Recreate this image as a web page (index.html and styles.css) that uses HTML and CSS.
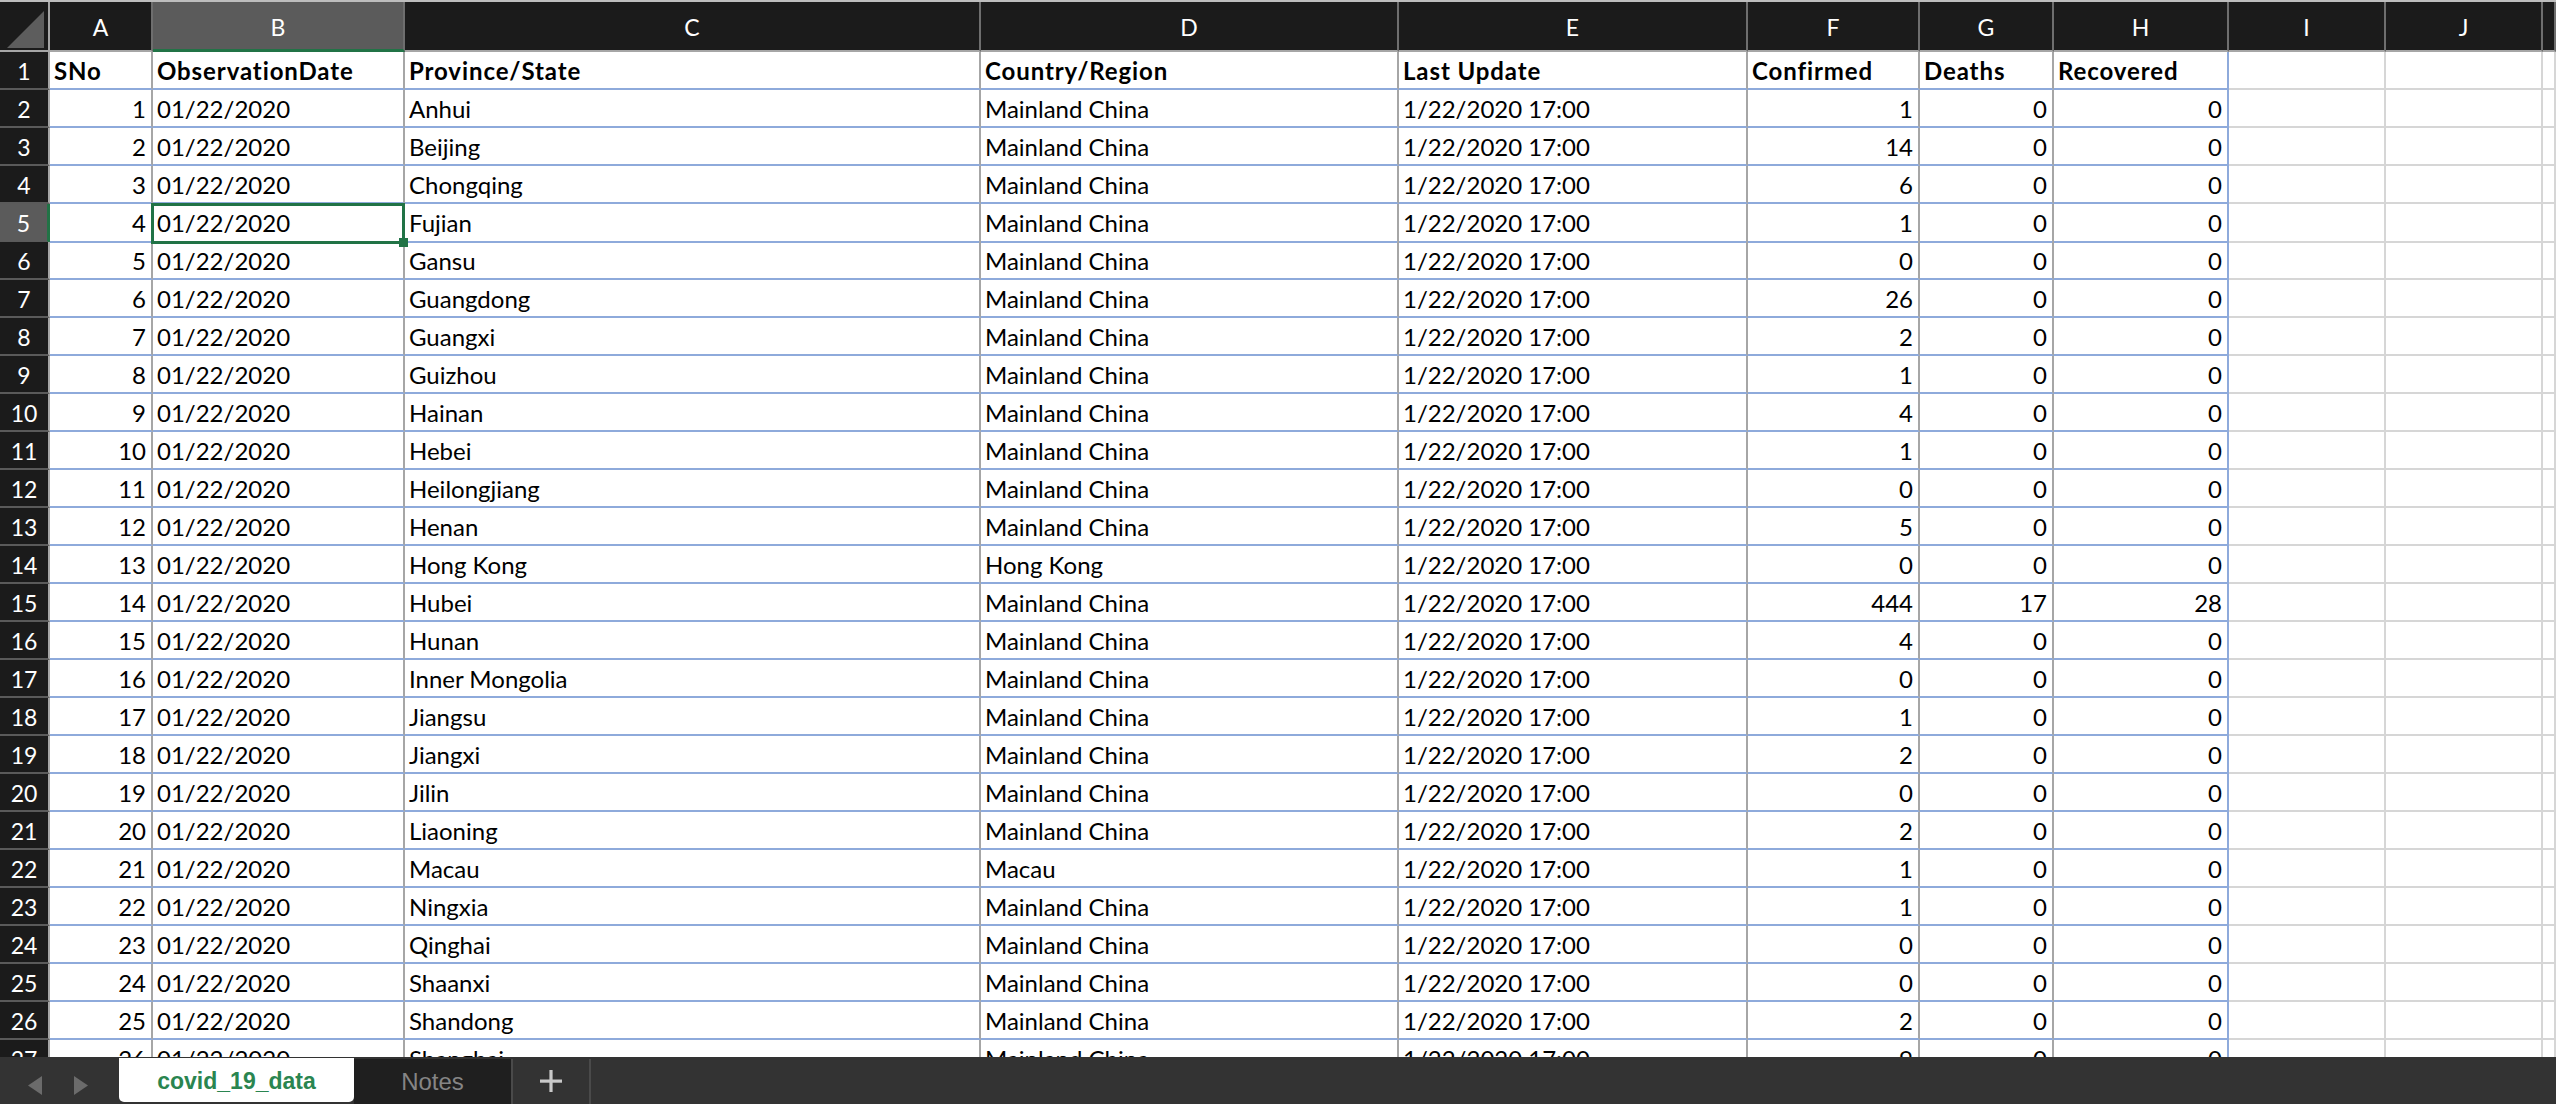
FILE: index.html
```html
<!DOCTYPE html>
<html>
<head>
<meta charset="utf-8">
<link rel="stylesheet" href="styles.css">
</head>
<body>
<div class="app">
  <div class="sheet">
    <div class="row head">
      <div class="corner"><svg width="50" height="50" viewBox="0 0 50 50"><polygon points="7,46 44,46 44,9" fill="#5d5d5d"/></svg></div>
      <div class="ch">A</div><div class="ch sel">B</div><div class="ch">C</div><div class="ch">D</div><div class="ch">E</div><div class="ch">F</div><div class="ch">G</div><div class="ch">H</div><div class="ch">I</div><div class="ch">J</div><div class="ch"></div>
    </div>
    <div class="row"><div class="rh">1</div><div class="c b">SNo</div><div class="c b">ObservationDate</div><div class="c b">Province/State</div><div class="c b">Country/Region</div><div class="c b">Last Update</div><div class="c b">Confirmed</div><div class="c b">Deaths</div><div class="c b hl">Recovered</div><div class="e"></div><div class="e"></div><div class="e"></div></div>
    <div class="row"><div class="rh">2</div><div class="c n">1</div><div class="c">01/22/2020</div><div class="c">Anhui</div><div class="c">Mainland China</div><div class="c">1/22/2020 17:00</div><div class="c n">1</div><div class="c n">0</div><div class="c n hl">0</div><div class="e"></div><div class="e"></div><div class="e"></div></div>
    <div class="row"><div class="rh">3</div><div class="c n">2</div><div class="c">01/22/2020</div><div class="c">Beijing</div><div class="c">Mainland China</div><div class="c">1/22/2020 17:00</div><div class="c n">14</div><div class="c n">0</div><div class="c n hl">0</div><div class="e"></div><div class="e"></div><div class="e"></div></div>
    <div class="row"><div class="rh">4</div><div class="c n">3</div><div class="c">01/22/2020</div><div class="c">Chongqing</div><div class="c">Mainland China</div><div class="c">1/22/2020 17:00</div><div class="c n">6</div><div class="c n">0</div><div class="c n hl">0</div><div class="e"></div><div class="e"></div><div class="e"></div></div>
    <div class="row"><div class="rh selrow">5</div><div class="c n">4</div><div class="c active">01/22/2020<span class="handle"></span></div><div class="c">Fujian</div><div class="c">Mainland China</div><div class="c">1/22/2020 17:00</div><div class="c n">1</div><div class="c n">0</div><div class="c n hl">0</div><div class="e"></div><div class="e"></div><div class="e"></div></div>
    <div class="row"><div class="rh">6</div><div class="c n">5</div><div class="c">01/22/2020</div><div class="c">Gansu</div><div class="c">Mainland China</div><div class="c">1/22/2020 17:00</div><div class="c n">0</div><div class="c n">0</div><div class="c n hl">0</div><div class="e"></div><div class="e"></div><div class="e"></div></div>
    <div class="row"><div class="rh">7</div><div class="c n">6</div><div class="c">01/22/2020</div><div class="c">Guangdong</div><div class="c">Mainland China</div><div class="c">1/22/2020 17:00</div><div class="c n">26</div><div class="c n">0</div><div class="c n hl">0</div><div class="e"></div><div class="e"></div><div class="e"></div></div>
    <div class="row"><div class="rh">8</div><div class="c n">7</div><div class="c">01/22/2020</div><div class="c">Guangxi</div><div class="c">Mainland China</div><div class="c">1/22/2020 17:00</div><div class="c n">2</div><div class="c n">0</div><div class="c n hl">0</div><div class="e"></div><div class="e"></div><div class="e"></div></div>
    <div class="row"><div class="rh">9</div><div class="c n">8</div><div class="c">01/22/2020</div><div class="c">Guizhou</div><div class="c">Mainland China</div><div class="c">1/22/2020 17:00</div><div class="c n">1</div><div class="c n">0</div><div class="c n hl">0</div><div class="e"></div><div class="e"></div><div class="e"></div></div>
    <div class="row"><div class="rh">10</div><div class="c n">9</div><div class="c">01/22/2020</div><div class="c">Hainan</div><div class="c">Mainland China</div><div class="c">1/22/2020 17:00</div><div class="c n">4</div><div class="c n">0</div><div class="c n hl">0</div><div class="e"></div><div class="e"></div><div class="e"></div></div>
    <div class="row"><div class="rh">11</div><div class="c n">10</div><div class="c">01/22/2020</div><div class="c">Hebei</div><div class="c">Mainland China</div><div class="c">1/22/2020 17:00</div><div class="c n">1</div><div class="c n">0</div><div class="c n hl">0</div><div class="e"></div><div class="e"></div><div class="e"></div></div>
    <div class="row"><div class="rh">12</div><div class="c n">11</div><div class="c">01/22/2020</div><div class="c">Heilongjiang</div><div class="c">Mainland China</div><div class="c">1/22/2020 17:00</div><div class="c n">0</div><div class="c n">0</div><div class="c n hl">0</div><div class="e"></div><div class="e"></div><div class="e"></div></div>
    <div class="row"><div class="rh">13</div><div class="c n">12</div><div class="c">01/22/2020</div><div class="c">Henan</div><div class="c">Mainland China</div><div class="c">1/22/2020 17:00</div><div class="c n">5</div><div class="c n">0</div><div class="c n hl">0</div><div class="e"></div><div class="e"></div><div class="e"></div></div>
    <div class="row"><div class="rh">14</div><div class="c n">13</div><div class="c">01/22/2020</div><div class="c">Hong Kong</div><div class="c">Hong Kong</div><div class="c">1/22/2020 17:00</div><div class="c n">0</div><div class="c n">0</div><div class="c n hl">0</div><div class="e"></div><div class="e"></div><div class="e"></div></div>
    <div class="row"><div class="rh">15</div><div class="c n">14</div><div class="c">01/22/2020</div><div class="c">Hubei</div><div class="c">Mainland China</div><div class="c">1/22/2020 17:00</div><div class="c n">444</div><div class="c n">17</div><div class="c n hl">28</div><div class="e"></div><div class="e"></div><div class="e"></div></div>
    <div class="row"><div class="rh">16</div><div class="c n">15</div><div class="c">01/22/2020</div><div class="c">Hunan</div><div class="c">Mainland China</div><div class="c">1/22/2020 17:00</div><div class="c n">4</div><div class="c n">0</div><div class="c n hl">0</div><div class="e"></div><div class="e"></div><div class="e"></div></div>
    <div class="row"><div class="rh">17</div><div class="c n">16</div><div class="c">01/22/2020</div><div class="c">Inner Mongolia</div><div class="c">Mainland China</div><div class="c">1/22/2020 17:00</div><div class="c n">0</div><div class="c n">0</div><div class="c n hl">0</div><div class="e"></div><div class="e"></div><div class="e"></div></div>
    <div class="row"><div class="rh">18</div><div class="c n">17</div><div class="c">01/22/2020</div><div class="c">Jiangsu</div><div class="c">Mainland China</div><div class="c">1/22/2020 17:00</div><div class="c n">1</div><div class="c n">0</div><div class="c n hl">0</div><div class="e"></div><div class="e"></div><div class="e"></div></div>
    <div class="row"><div class="rh">19</div><div class="c n">18</div><div class="c">01/22/2020</div><div class="c">Jiangxi</div><div class="c">Mainland China</div><div class="c">1/22/2020 17:00</div><div class="c n">2</div><div class="c n">0</div><div class="c n hl">0</div><div class="e"></div><div class="e"></div><div class="e"></div></div>
    <div class="row"><div class="rh">20</div><div class="c n">19</div><div class="c">01/22/2020</div><div class="c">Jilin</div><div class="c">Mainland China</div><div class="c">1/22/2020 17:00</div><div class="c n">0</div><div class="c n">0</div><div class="c n hl">0</div><div class="e"></div><div class="e"></div><div class="e"></div></div>
    <div class="row"><div class="rh">21</div><div class="c n">20</div><div class="c">01/22/2020</div><div class="c">Liaoning</div><div class="c">Mainland China</div><div class="c">1/22/2020 17:00</div><div class="c n">2</div><div class="c n">0</div><div class="c n hl">0</div><div class="e"></div><div class="e"></div><div class="e"></div></div>
    <div class="row"><div class="rh">22</div><div class="c n">21</div><div class="c">01/22/2020</div><div class="c">Macau</div><div class="c">Macau</div><div class="c">1/22/2020 17:00</div><div class="c n">1</div><div class="c n">0</div><div class="c n hl">0</div><div class="e"></div><div class="e"></div><div class="e"></div></div>
    <div class="row"><div class="rh">23</div><div class="c n">22</div><div class="c">01/22/2020</div><div class="c">Ningxia</div><div class="c">Mainland China</div><div class="c">1/22/2020 17:00</div><div class="c n">1</div><div class="c n">0</div><div class="c n hl">0</div><div class="e"></div><div class="e"></div><div class="e"></div></div>
    <div class="row"><div class="rh">24</div><div class="c n">23</div><div class="c">01/22/2020</div><div class="c">Qinghai</div><div class="c">Mainland China</div><div class="c">1/22/2020 17:00</div><div class="c n">0</div><div class="c n">0</div><div class="c n hl">0</div><div class="e"></div><div class="e"></div><div class="e"></div></div>
    <div class="row"><div class="rh">25</div><div class="c n">24</div><div class="c">01/22/2020</div><div class="c">Shaanxi</div><div class="c">Mainland China</div><div class="c">1/22/2020 17:00</div><div class="c n">0</div><div class="c n">0</div><div class="c n hl">0</div><div class="e"></div><div class="e"></div><div class="e"></div></div>
    <div class="row"><div class="rh">26</div><div class="c n">25</div><div class="c">01/22/2020</div><div class="c">Shandong</div><div class="c">Mainland China</div><div class="c">1/22/2020 17:00</div><div class="c n">2</div><div class="c n">0</div><div class="c n hl">0</div><div class="e"></div><div class="e"></div><div class="e"></div></div>
    <div class="row"><div class="rh">27</div><div class="c n">26</div><div class="c">01/22/2020</div><div class="c">Shanghai</div><div class="c">Mainland China</div><div class="c">1/22/2020 17:00</div><div class="c n">9</div><div class="c n">0</div><div class="c n hl">0</div><div class="e"></div><div class="e"></div><div class="e"></div></div>
  </div>
  <div class="tabbar">
    <div class="nav">
      <svg width="119" height="47" viewBox="0 0 119 47"><polygon points="42,19 42,38 28,28.5" fill="#6b6b6b"/><polygon points="74,19 74,38 88,28.5" fill="#6b6b6b"/></svg>
    </div>
    <div class="tab active-tab">covid_19_data</div>
    <div class="tab other-tab">Notes</div>
    <div class="addbtn"><svg width="22" height="22" viewBox="0 0 22 22"><rect x="0" y="9.5" width="22" height="3.2" fill="#c9c9c9"/><rect x="9.4" y="0" width="3.2" height="22" fill="#c9c9c9"/></svg></div>
    <div class="rest"></div>
  </div>
</div>
</body>
</html>
```
FILE: styles.css
```css
html, body {
  margin: 0;
  padding: 0;
  background: #ffffff;
  overflow: hidden;
}
.app {
  width: 2556px;
  height: 1104px;
  display: flex;
  flex-direction: column;
  overflow: hidden;
}
.sheet {
  flex: 1;
  overflow: hidden;
  border-top: 2px solid #bdbdbd;
  min-height: 0;
}
.row {
  display: grid;
  grid-template-columns: 50px 103px 252px 576px 418px 349px 172px 134px 175px 157px 157px 1fr;
  height: 38px;
}
.row > div {
  box-sizing: border-box;
  border-right: 2px solid #a6a6a6;
  border-bottom: 2px solid #8eaadb;
  font-family: Lato, "Liberation Sans", sans-serif;
  font-size: 24px;
  line-height: 36px;
  color: #000;
  white-space: nowrap;
  overflow: hidden;
}
.row.head {
  height: 50px;
}
.row.head > div {
  background: #1b1b1b;
  color: #ffffff;
  border-right: 2px solid #6e6e6e;
  border-bottom: 2px solid #a6a6a6;
  font-size: 23px;
  line-height: 48px;
  padding-top: 1px;
  text-align: center;
}
.row.head > .corner {
  padding: 0;
  border-right: 2px solid #a6a6a6;
}
.corner svg {
  display: block;
}
.row.head > .ch.sel {
  background: #5b5b5b;
  border-bottom: 3px solid #217346;
}
.row > .rh {
  background: #1b1b1b;
  color: #ffffff;
  text-align: center;
  font-size: 23px;
  border-bottom: 2px solid #5a5a5a;
  border-right: 2px solid #a6a6a6;
  padding-top: 1px;
}
.row > .rh.selrow {
  background: #5b5b5b;
  border-right: 3px solid #217346;
}
.c {
  padding: 1px 5px 0 4px;
}
.c.b {
  font-weight: 700;
  letter-spacing: 0.9px;
}
.c.n {
  text-align: right;
}
.row > .c.hl {
  border-right-color: #8eaadb;
}
.row > .e {
  border-right-color: #d6d6d6;
  border-bottom-color: #d6d6d6;
}
.row > .c.active {
  position: relative;
  overflow: visible;
  z-index: 2;
}
.active::after {
  content: "";
  position: absolute;
  left: -2px;
  top: -1px;
  right: -2px;
  bottom: -3px;
  border: 3px solid #217346;
  pointer-events: none;
}
.handle {
  position: absolute;
  right: -5px;
  bottom: -6px;
  width: 9px;
  height: 9px;
  background: #217346;
  z-index: 3;
}
.tabbar {
  height: 47px;
  flex: none;
  background: #333333;
  display: flex;
  align-items: stretch;
  font-family: "Liberation Sans", Arial, sans-serif;
}
.nav {
  width: 119px;
  flex: none;
}
.nav svg {
  display: block;
}
.tab {
  display: flex;
  align-items: center;
  justify-content: center;
  box-sizing: border-box;
}
.active-tab {
  width: 235px;
  margin-top: 1px;
  margin-bottom: 2px;
  background: #ffffff;
  color: #2a8550;
  font-weight: 700;
  font-size: 23px;
  border-radius: 0 0 5px 5px;
  padding-top: 2px;
}
.other-tab {
  width: 159px;
  margin-top: 2px;
  background: #1f1f1f;
  color: #858585;
  font-size: 24px;
  border-right: 2px solid #4a4a4a;
}
.addbtn {
  width: 76px;
  display: flex;
  align-items: center;
  justify-content: center;
  border-right: 2px solid #4a4a4a;
  margin-top: 2px;
  padding-bottom: 2px;
}
.addbtn svg {
  display: block;
}
.rest {
  flex: 1;
}
```
